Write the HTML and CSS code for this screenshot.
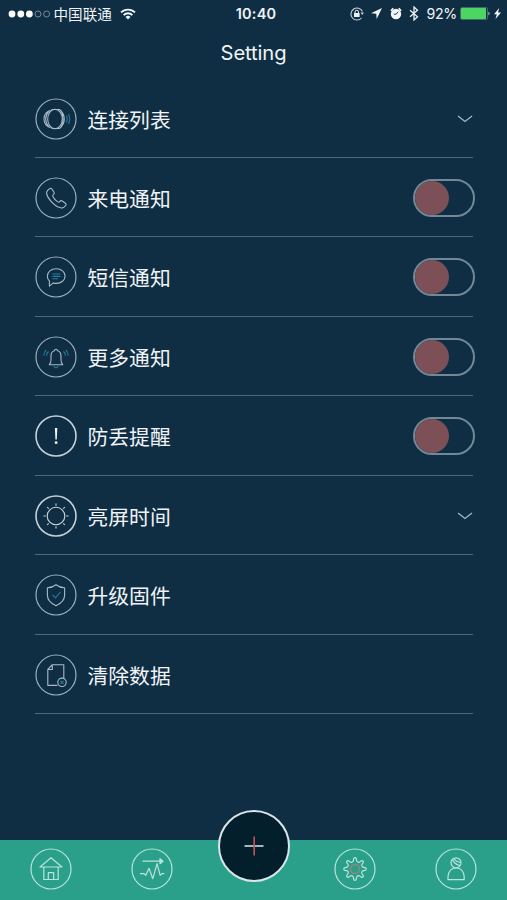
FILE: index.html
```html
<!DOCTYPE html>
<html lang="zh-CN">
<head>
<meta charset="utf-8">
<title>Setting</title>
<link rel="stylesheet" href="styles.css">
</head>
<body>
<div class="screen">
  <header class="status">
    <div class="status-left">
      <svg class="signal" width="43" height="10" viewBox="0 0 43 10"><g fill="#fff"><circle cx="4" cy="5" r="3.4"/><circle cx="12.8" cy="5" r="3.4"/><circle cx="21.4" cy="5" r="3.4"/></g><g fill="none" stroke="#8190a3" stroke-width=".9"><circle cx="30" cy="5" r="3"/><circle cx="38.6" cy="5" r="3"/></g></svg>
      <span class="carrier">中国联通</span>
      <svg class="wifi" width="16" height="12" viewBox="0 0 16 12"><g fill="none" stroke="#f4f7fa" stroke-width="1.8"><path d="M1 4.4a10 10 0 0 1 14 0"/><path d="M3.6 7.1a6.2 6.2 0 0 1 8.8 0"/></g><path d="M5.5 9a3.6 3.6 0 0 1 5 0L8 11.6z" fill="#f4f7fa"/></svg>
    </div>
    <div class="clock">10:40</div>
    <div class="status-right">
      <svg width="14" height="14" viewBox="0 0 14 14"><path d="M12.400 4.500A6 6 0 1 0 11.500 11" fill="none" stroke="#c9d4de" stroke-width="1.100"/><path d="M10.500 5.600h3.400l-1.600 2.300z" fill="#c9d4de"/><rect x="4" y="6" width="5.600" height="4" fill="#e9eff4"/><path d="M5.100 6V4.900a1.700 1.700 0 0 1 3.400 0V6" fill="none" stroke="#e9eff4"/></svg>
      <svg class="arrow" width="11" height="11" viewBox="0 0 11 11"><path d="M11 0 0 5.200l5.300.5.400 5.300z" fill="#f4f7fa"/></svg>
      <svg class="alarm" width="12" height="13" viewBox="0 0 12 13"><circle cx="6" cy="7" r="5.200" fill="#f4f7fa"/><path d="m.8 3.800 2.500-2.600M11.200 3.800 8.700 1.200" stroke="#f4f7fa" stroke-width="1.600"/><path d="M6.200 7.200H3.800M6.200 7.200 8 4.800" fill="none" stroke="#0f2e43" stroke-width=".9"/></svg>
      <svg class="bluetooth" width="10" height="15" viewBox="0 0 10 15"><path d="m1 4.200 7.500 6.600L5 14V1l3.500 3.200L1 10.800" fill="none" stroke="#e9eff4" stroke-width="1.300"/></svg>
      <span class="percent">92%</span>
      <svg class="battery" width="31" height="13" viewBox="0 0 31 13"><rect x=".5" y=".5" width="27" height="12" rx="1.500" fill="none" stroke="#54817c" stroke-width=".7"/><rect x="1" y="1" width="25" height="11" rx="1" fill="#4bd662"/><path d="M28.500 4.500q2.200 2 0 4z" fill="#c6dbd9"/></svg>
      <svg class="bolt" width="7" height="11" viewBox="0 0 7 11"><path d="M5.200 0 0 6.200h2.800L1.500 11 7 4.400H4z" fill="#f4f7fa"/></svg>
    </div>
  </header>
  <h1 class="title">Setting</h1>

  <main class="list">
    <div class="row">
      <svg class="icon" viewBox="0 0 42 42"><circle class="ring" cx="21" cy="21" r="20"/><ellipse cx="20" cy="21" rx="7.300" ry="9.800"/><path d="M16.500 11.500h8q4.800 4 4.800 9.500t-4.800 9.500h-8M15.500 12.300Q9 14.500 9 21t6.500 8.700M14 13q-3.300 3.500-3.300 8t3.300 8M26 12.500q2 3.500 2 8.500t-2 8.500"/><path class="blue" d="M31.500 17.500q1.600 3.500 0 7M33.500 16q2.400 5 0 10"/></svg>
      <span class="label">连接列表</span>
      <svg class="chevron" width="16" height="8" viewBox="0 0 16 8"><path d="m1 1 7 5.500L15 1"/></svg>
    </div>
    <div class="row">
      <svg class="icon" viewBox="0 0 42 42"><circle class="ring" cx="21" cy="21" r="20"/><path d="M14.700 11.700q1.300-1 2.200.3l2.100 3.200q.8 1.300-.5 2.200-1.200 1-.5 2.300 1.800 3.200 4.700 5.200 1.300.8 2.200-.5 1-1.300 2.300-.4l3.200 2.200q1.300 1 .2 2.300-1.300 2-3.200 2.400-4.400.4-9-4.200Q13 21.700 11.700 17q-.7-3.200 3-5.300z"/></svg>
      <span class="label">来电通知</span>
      <span class="toggle"></span>
    </div>
    <div class="row">
      <svg class="icon" viewBox="0 0 42 42"><circle class="ring" cx="21" cy="21" r="20"/><path d="M14.400 30.200v-5.400q-2.100-1.900-2.100-4.600c0-4.400 3.800-7.400 8.900-7.400s8.900 3 8.900 7.200-3.800 7.400-8.900 7.400q-1.700 0-2.900-.5z"/><path class="blue" d="M17.500 18h7.800m-7.800 2.400h7.800m-7.800 2.400h5.500"/></svg>
      <span class="label">短信通知</span>
      <span class="toggle"></span>
    </div>
    <div class="row">
      <svg class="icon" viewBox="0 0 42 42"><circle class="ring" cx="21" cy="21" r="20"/><path d="M14.200 28.800h13.600q-1.800-2-1.800-4.500V20q0-4.500-3.500-5.300a1.500 1.500 0 1 0-3 0Q16 15.500 16 20v4.300q0 2.500-1.800 4.500z"/><path class="blue" d="M18.500 30.300q2.500 2.500 5 0M13.500 15.500q-2 1.600-2 4.300M11.300 13.800q-2.500 2.300-2.500 5.700M28.500 15.500q2 1.600 2 4.300m.2-6q2.500 2.300 2.500 5.700"/></svg>
      <span class="label">更多通知</span>
      <span class="toggle"></span>
    </div>
    <div class="row">
      <svg class="icon strong" viewBox="0 0 42 42"><circle class="ring" cx="21" cy="21" r="20"/><path class="solid" d="M19.900 13h2.400l-.5 11.500h-1.400z"/><circle class="solid" cx="21.100" cy="27.700" r="1.400"/></svg>
      <span class="label">防丢提醒</span>
      <span class="toggle"></span>
    </div>
    <div class="row">
      <svg class="icon strong" viewBox="0 0 42 42"><circle class="ring" cx="21" cy="21" r="20"/><circle cx="21" cy="21" r="8.800"/><path d="M21 8.500v2.300m0 20.400v2.300M8.500 21h2.300m20.400 0h2.300M12.200 12.200l1.500 1.500m14.600 14.600 1.500 1.500M12.200 29.800l1.500-1.500m14.600-14.600 1.500-1.500"/></svg>
      <span class="label">亮屏时间</span>
      <svg class="chevron" width="16" height="8" viewBox="0 0 16 8"><path d="m1 1 7 5.500L15 1"/></svg>
    </div>
    <div class="row">
      <svg class="icon" viewBox="0 0 42 42"><circle class="ring" cx="21" cy="21" r="20"/><path d="M21 10.800q3.800 3 8.600 3v7.500q0 6.500-8.600 10.400-8.600-3.900-8.600-10.400v-7.500q4.800 0 8.600-3z"/><path class="blue" d="m17.500 20.800 3 3 5-5.800"/></svg>
      <span class="label">升级固件</span>
    </div>
    <div class="row">
      <svg class="icon" viewBox="0 0 42 42"><circle class="ring" cx="21" cy="21" r="20"/><path d="M22.500 31.400h-9.700V15.500l4.500-4.800h11.500v13.800M12.800 15.500h4.500v-4.800"/><circle class="badge" cx="27" cy="28.300" r="4.200"/><path class="blue" d="m25.500 26.800 3 3m0-3-3 3"/></svg>
      <span class="label">清除数据</span>
    </div>
  </main>

  <nav class="tabs">
    <svg class="tab" viewBox="0 0 42 42"><circle cx="21" cy="21" r="20"/><path d="M10 19h22L21 9.700zM13.800 19v12.500h14.400V19M18.300 31.500v-6.800h5.400v6.800"/></svg>
    <svg class="tab" viewBox="0 0 42 42"><circle cx="21" cy="21" r="20"/><path d="M11.500 13.200h20M29 10.700l3 2.500-3 2.500zM9 25.700h4l1.800 1.600 3.200-7 3.800 10.400 4.300-15 3 11.700 1.700-1.700h2.500"/></svg>
    <div class="add"><svg width="22" height="22" viewBox="0 0 22 22"><path d="M1.500 11h19" stroke="#f1f5f7" stroke-width="1.400"/><path d="M11.200 1.500v19" stroke="#c4515b" stroke-width="1.600"/></svg></div>
    <svg class="tab" viewBox="0 0 42 42"><circle cx="21" cy="21" r="20"/><path transform="translate(21 21)" d="M-1.800-7.800-1.100-10.800Q0-11.800 1.100-10.800L1.800-7.800Q3-6.300 4.240-6.790L6.860-8.410Q8.340-8.340 8.410-6.860L6.790-4.240Q6.300-3 7.800-1.800L10.800-1.100Q11.800 0 10.800 1.100L7.800 1.800Q6.300 3 6.790 4.240L8.410 6.860Q8.340 8.340 6.860 8.410L4.240 6.790Q3 6.300 1.800 7.800L1.100 10.800Q0 11.800-1.100 10.800L-1.800 7.800Q-3 6.300-4.240 6.790L-6.860 8.410Q-8.340 8.340-8.410 6.860L-6.790 4.240Q-6.300 3-7.800 1.800L-10.800 1.100Q-11.800 0-10.800-1.100L-7.800-1.800Q-6.300-3-6.790-4.240L-8.410-6.860Q-8.340-8.340-6.860-8.410L-4.240-6.790Q-3-6.300-1.800-7.800z"/><circle class="hub" cx="21" cy="21" r="4.600"/></svg>
    <svg class="tab" viewBox="0 0 42 42"><circle cx="21" cy="21" r="20"/><circle cx="21" cy="14.800" r="5"/><path d="M17.500 11.500q1.500 4.500 7.500 6M19 10.500q2 3.500 6.700 4M13 31.700h16.200v-3.200q-1-8.500-8.100-8.500T13 28.500z"/></svg>
  </nav>
</div>
</body>
</html>
```
FILE: styles.css
```css
* { box-sizing: border-box; }

body {
  margin: 0;
  background: #0f2e43;
  color: #f0f4f8;
  font-family: Inter, "Noto Sans CJK SC", sans-serif;
}

.screen {
  width: 507px;
  height: 900px;
  display: flex;
  flex-direction: column;
  overflow: hidden;
}

.status {
  height: 27px;
  padding: 0 6px 0 8px;
  display: grid;
  grid-template-columns: 1fr auto 1fr;
  align-items: center;
  flex: none;
}

.status-left, .status-right { display: flex; align-items: center; }
.status-right { justify-content: flex-end; }
.signal { margin-right: 2.5px; }
.carrier { font: 14.6px/27px "Noto Sans CJK SC", sans-serif; }
.wifi { margin-left: 8px; }
.clock { margin-left: 3px; font-size: 14.5px; font-weight: 600; letter-spacing: .2px; }
.arrow { margin-left: 7px; }
.alarm { margin-left: 8px; }
.bluetooth { margin-left: 7px; }
.percent { margin-left: 8px; width: 31px; font-size: 14.2px; letter-spacing: -.4px; white-space: nowrap; }
.battery { margin-left: 2.5px; }
.bolt { margin-left: 3px; }

.title {
  margin: 0;
  height: 51.5px;
  font-size: 20.2px;
  font-weight: 400;
  line-height: 52px;
  text-align: center;
  letter-spacing: -.1px;
  flex: none;
}

.list { padding: 0 34px 0 35px; flex: 1; }

.row {
  height: 79.45px;
  padding-top: 1.6px;
  display: flex;
  align-items: center;
  border-bottom: 1px solid #4c687b;
}

.icon {
  width: 42px;
  height: 42px;
  margin-left: -.5px;
  flex: none;
  fill: none;
  stroke: #a8bac8;
  stroke-width: 1.1;
  stroke-linejoin: round;
}

.icon .ring { stroke: #9bb0c0; stroke-width: 1.2; }
.icon.strong { stroke: #ccd6df; }
.icon.strong .ring { stroke: #c5d1da; stroke-width: 1.6; }
.icon .blue { stroke: #227fa0; }
.icon .solid { fill: #f0f4f8; stroke: none; }
.icon .badge { fill: #0f2e43; }

.label {
  margin-left: 11px;
  flex: 1;
  font: 20.8px/30px "Noto Sans CJK SC", sans-serif;
}

.chevron { fill: none; stroke: #a8bac8; stroke-width: 1.2; }

.toggle {
  width: 62px;
  height: 38px;
  margin-right: -2px;
  border: 2px solid #728896;
  border-radius: 19px;
}

.toggle::before {
  content: "";
  display: block;
  width: 34px;
  height: 34px;
  border-radius: 50%;
  background: #7d5057;
}

.tabs {
  height: 60px;
  padding-bottom: 2px;
  display: grid;
  grid-template-columns: repeat(5, 1fr);
  align-items: center;
  justify-items: center;
  background: #2a9f8a;
  flex: none;
}

.tab {
  width: 42px;
  height: 42px;
  fill: none;
  stroke: #b9e5dc;
  stroke-width: 1.2;
  stroke-linejoin: round;
}

.tab .hub { stroke: #9b8579; stroke-width: 1.5; }

.add {
  width: 72px;
  height: 72px;
  margin: -46px 0 0 1px;
  display: flex;
  align-items: center;
  justify-content: center;
  border: 2px solid #dbe5ea;
  border-radius: 50%;
  background: #031f2c;
}

.add svg { fill: none; }
```
